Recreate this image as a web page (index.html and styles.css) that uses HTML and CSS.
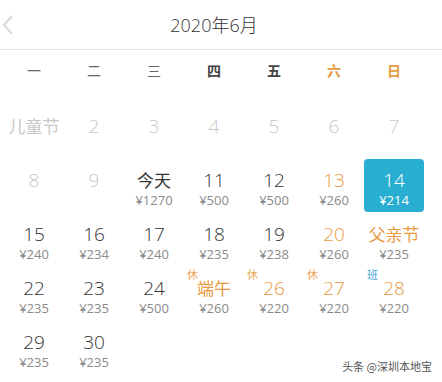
FILE: index.html
```
<!DOCTYPE html>
<html lang="zh">
<head>
<meta charset="utf-8">
<link rel="stylesheet" href="styles.css">
</head>
<body>
<div class="cal">
  <div class="head">
    <svg class="prev" width="14" height="22" viewBox="0 0 14 22"><path d="M11 2 L3 11 L11 20" fill="none" stroke="#dcdcdc" stroke-width="2.4"/></svg>
    <div class="title">2020年6月</div>
  </div>
  <div class="grid week">
    <div>一</div><div>二</div><div>三</div><div class="b">四</div><div class="b">五</div><div class="b we">六</div><div class="b we">日</div>
  </div>
  <div class="grid days">
    <div class="cell off"><span class="n zh">儿童节</span></div>
    <div class="cell off"><span class="n">2</span></div>
    <div class="cell off"><span class="n">3</span></div>
    <div class="cell off"><span class="n">4</span></div>
    <div class="cell off"><span class="n">5</span></div>
    <div class="cell off"><span class="n">6</span></div>
    <div class="cell off"><span class="n">7</span></div>

    <div class="cell off"><span class="n">8</span></div>
    <div class="cell off"><span class="n">9</span></div>
    <div class="cell"><span class="n zh">今天</span><span class="p">¥1270</span></div>
    <div class="cell"><span class="n">11</span><span class="p">¥500</span></div>
    <div class="cell"><span class="n">12</span><span class="p">¥500</span></div>
    <div class="cell hol"><span class="n">13</span><span class="p">¥260</span></div>
    <div class="cell sel"><span class="n">14</span><span class="p">¥214</span></div>

    <div class="cell"><span class="n">15</span><span class="p">¥240</span></div>
    <div class="cell"><span class="n">16</span><span class="p">¥234</span></div>
    <div class="cell"><span class="n">17</span><span class="p">¥240</span></div>
    <div class="cell"><span class="n">18</span><span class="p">¥235</span></div>
    <div class="cell"><span class="n">19</span><span class="p">¥238</span></div>
    <div class="cell hol"><span class="n">20</span><span class="p">¥260</span></div>
    <div class="cell hol"><span class="n zh">父亲节</span><span class="p">¥235</span></div>

    <div class="cell"><span class="n">22</span><span class="p">¥235</span></div>
    <div class="cell"><span class="n">23</span><span class="p">¥235</span></div>
    <div class="cell"><span class="n">24</span><span class="p">¥500</span></div>
    <div class="cell hol"><i class="tag">休</i><span class="n zh">端午</span><span class="p">¥260</span></div>
    <div class="cell hol"><i class="tag">休</i><span class="n">26</span><span class="p">¥220</span></div>
    <div class="cell hol"><i class="tag">休</i><span class="n">27</span><span class="p">¥220</span></div>
    <div class="cell hol"><i class="tag work">班</i><span class="n">28</span><span class="p">¥220</span></div>

    <div class="cell"><span class="n">29</span><span class="p">¥235</span></div>
    <div class="cell"><span class="n">30</span><span class="p">¥235</span></div>
  </div>
  <div class="mark">头条 @深圳本地宝</div>
</div>
</body>
</html>
```
FILE: styles.css
```
html, body {
  margin: 0;
  padding: 0;
  background: #fff;
}
body {
  font-family: "Open Sans", "Noto Sans CJK SC", sans-serif;
  color: #333;
  width: 442px;
  height: 382px;
  overflow: hidden;
}
.cal {
  position: relative;
  width: 442px;
  height: 382px;
}
.head {
  position: relative;
  height: 49px;
  border-bottom: 1px solid #e2e2e2;
  display: flex;
  align-items: center;
  padding-left: 4px;
}
.prev {
  position: absolute;
  left: 1px;
  top: 14px;
}
.title {
  width: 420px;
  text-align: center;
  font-size: 18px;
  font-weight: 300;
  color: #333;
  line-height: 24px;
}
.grid {
  display: grid;
  grid-template-columns: repeat(7, 60px);
  padding-left: 4px;
}
.week {
  height: 40px;
  align-items: center;
  text-align: center;
  font-size: 14px;
  color: #666;
  font-family: "Noto Sans CJK SC", sans-serif;
  margin-bottom: 15px;
}
.week .b {
  font-weight: bold;
  color: #444;
}
.week .we {
  color: #e49a3e;
}
.days {
  grid-auto-rows: 54px;
}
.cell {
  position: relative;
  display: flex;
  flex-direction: column;
  align-items: center;
  padding-top: 9px;
  box-sizing: border-box;
}
.n {
  font-size: 19px;
  font-weight: 300;
  line-height: 24px;
  color: #333;
  white-space: nowrap;
}
.n.zh {
  font-family: "Noto Sans CJK SC", sans-serif;
  font-size: 17px;
  font-weight: 400;
}
.p {
  font-size: 13px;
  line-height: 16px;
  color: #8a8a8a;
}
.off .n {
  color: #c8c8c8;
}
.hol .n {
  color: #e9993f;
}
.sel {
  background: #28aed0;
  border-radius: 4px;
  height: 53px;
}
.sel .n, .sel .p {
  color: #fff;
}
.tag {
  position: absolute;
  left: 3px;
  top: 1px;
  font-style: normal;
  font-size: 11px;
  line-height: 12px;
  color: #eba65a;
  font-family: "Noto Sans CJK SC", sans-serif;
}
.tag.work {
  color: #4aa7d8;
}
.mark {
  position: absolute;
  right: 10px;
  bottom: 9px;
  font-size: 11px;
  line-height: 14px;
  color: #555;
  font-family: "Noto Sans CJK SC", sans-serif;
}
```
